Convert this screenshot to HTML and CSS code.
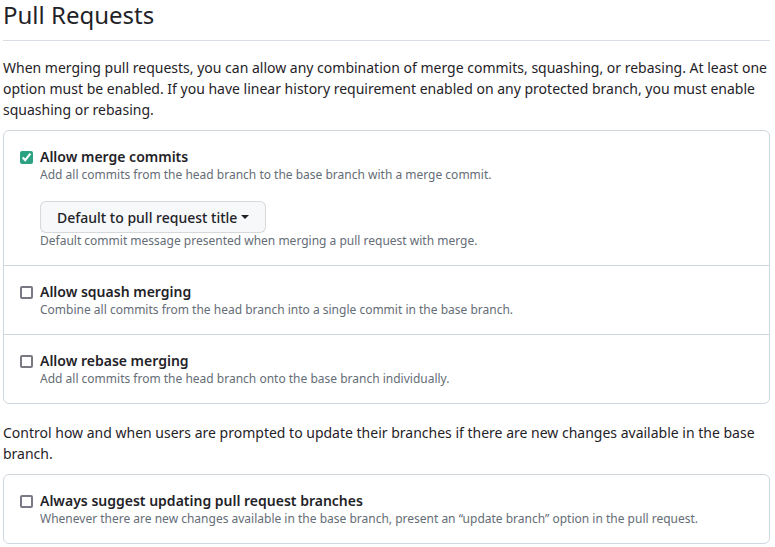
FILE: index.html
```html
<!DOCTYPE html>
<html>
<head>
<meta charset="utf-8">
<link rel="stylesheet" href="styles.css">
</head>
<body>
<div class="page">
  <h2 class="subhead">Pull Requests</h2>
  <p class="intro">When merging pull requests, you can allow any combination of merge commits, squashing, or rebasing. At least one option must be enabled. If you have linear history requirement enabled on any protected branch, you must enable squashing or rebasing.</p>
  <div class="box">
    <div class="row">
      <label class="check">
        <input type="checkbox" checked>
        <span class="title">Allow merge commits</span>
      </label>
      <p class="note">Add all commits from the head branch to the base branch with a merge commit.</p>
      <button class="btn">Default to pull request title<span class="caret"></span></button>
      <p class="note">Default commit message presented when merging a pull request with merge.</p>
    </div>
    <div class="row">
      <label class="check">
        <input type="checkbox">
        <span class="title">Allow squash merging</span>
      </label>
      <p class="note">Combine all commits from the head branch into a single commit in the base branch.</p>
    </div>
    <div class="row">
      <label class="check">
        <input type="checkbox">
        <span class="title">Allow rebase merging</span>
      </label>
      <p class="note">Add all commits from the head branch onto the base branch individually.</p>
    </div>
  </div>
  <p class="intro second">Control how and when users are prompted to update their branches if there are new changes available in the base branch.</p>
  <div class="box">
    <div class="row">
      <label class="check">
        <input type="checkbox">
        <span class="title">Always suggest updating pull request branches</span>
      </label>
      <p class="note">Whenever there are new changes available in the base branch, present an “update branch” option in the pull request.</p>
    </div>
  </div>
</div>
</body>
</html>
```
FILE: styles.css
```css
html, body {
  margin: 0;
  padding: 0;
  background: #ffffff;
}
body {
  font-family: "Noto Sans", "Open Sans", sans-serif;
  font-size: 14px;
  line-height: 1.5;
  color: #1f2328;
}
.page {
  padding: 0 5px 0 3px;
}
.subhead {
  margin: 0;
  font-size: 24px;
  font-weight: 400;
  line-height: 30px;
  padding-bottom: 10px;
  border-bottom: 1px solid #d8dee4;
}
.intro {
  margin: 16px 0 10px;
  line-height: 21px;
}
.intro.second {
  margin-top: 18px;
}
.box {
  border: 1px solid #d0d7de;
  border-radius: 6px;
}
.row {
  padding: 16px 16px 16px 36px;
  border-top: 1px solid #d0d7de;
}
.row:first-child {
  border-top: 0;
}
.check {
  display: block;
  position: relative;
  line-height: 20px;
}
.check input {
  position: absolute;
  left: -20px;
  top: 4px;
  margin: 0;
  width: 13px;
  height: 13px;
  accent-color: #2da283;
}
.check input:not(:checked) {
  appearance: none;
  -webkit-appearance: none;
  box-sizing: border-box;
  border: 2px solid #7a7882;
  border-radius: 2px;
  background: #ffffff;
}
.title {
  font-weight: 600;
}
.note {
  margin: 0;
  font-size: 12px;
  line-height: 16px;
  color: #656d76;
}
.btn {
  display: inline-flex;
  align-items: center;
  margin-top: 18px;
  height: 32px;
  padding: 0 16px;
  font-family: inherit;
  font-size: 14px;
  font-weight: 500;
  color: #1f2328;
  background: #f6f8fa;
  border: 1px solid rgba(31, 35, 40, 0.15);
  border-radius: 6px;
}
.caret {
  display: inline-block;
  width: 0;
  height: 0;
  margin-left: 4px;
  border-top: 4px solid #1f2328;
  border-left: 4px solid transparent;
  border-right: 4px solid transparent;
}
```
